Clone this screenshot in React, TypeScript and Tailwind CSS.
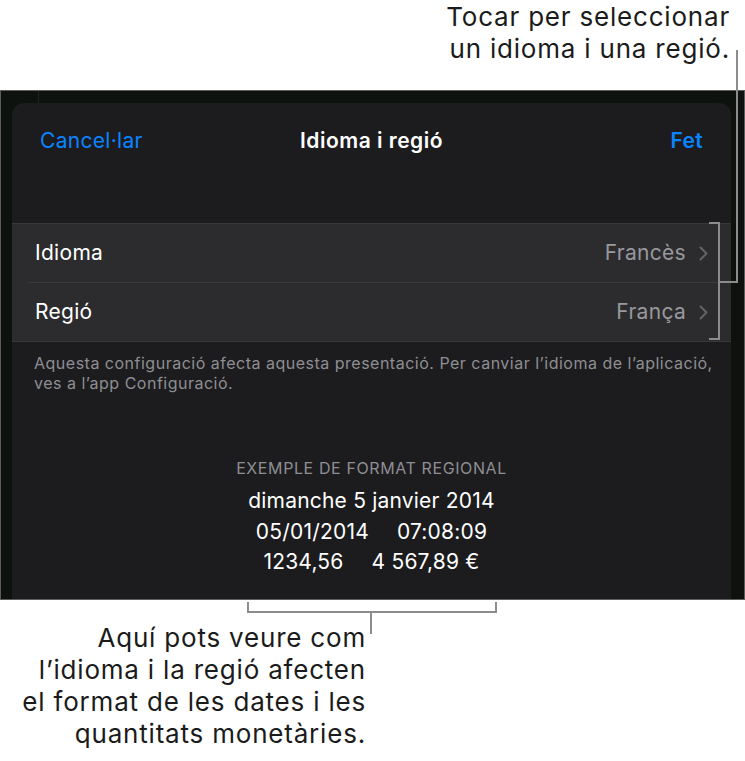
const rows = [
  { label: 'Idioma', value: 'Francès' },
  { label: 'Regió', value: 'França' },
];

function Chevron() {
  return (
    <svg width="9" height="15" viewBox="0 0 9 15" fill="none" stroke="#636366" strokeWidth={2} strokeLinecap="round" strokeLinejoin="round">
      <path d="M1.5 1.5 L7.5 7.5 L1.5 13.5" />
    </svg>
  );
}

function Connectors() {
  return (
    <svg
      className="pointer-events-none absolute left-0 top-0"
      width={745}
      height={761}
      viewBox="0 0 745 761"
      fill="none"
      stroke="#8c8c8c"
      strokeWidth={2}
    >
      <path d="M737 50 V282 H719" />
      <path d="M709 223 H719 V339 H709" />
      <path d="M248 602 V612 H496 V602" />
      <path d="M371 612 V634" />
      <path d="M38.5 91 V103" stroke="#1f231f" strokeWidth={1} />
    </svg>
  );
}

export default function App() {
  return (
    <div className="relative h-[761px] w-[745px] overflow-hidden bg-white font-['Inter',sans-serif]">
      <div className="h-[90px] pr-[15px] pt-px text-right text-[26px] leading-[32px] tracking-[0.8px] text-[#1b1b1b]">
        <p>Tocar per seleccionar</p>
        <p>un idioma i una regió.</p>
      </div>

      <div className="h-[510px] border border-[#5c5c5c] bg-[#0e120e] pl-[11px] pr-[13px] pt-[12px]">
        <div className="h-full overflow-hidden rounded-t-[12px] bg-[#1c1c1e]">
          <div className="grid h-[76px] grid-cols-[1fr_auto_1fr] items-center px-[28px] text-[21px] tracking-[0.3px]">
            <span className="text-[#0a84ff]">Cancel·lar</span>
            <span className="font-semibold tracking-[0.5px] text-white">Idioma i regió</span>
            <span className="text-right font-semibold text-[#0a84ff]">Fet</span>
          </div>

          <div className="mt-[44px] border-y border-[#38383a] bg-[#2c2c2e]">
            {rows.map((r, i) => (
              <div key={r.label}>
                {i > 0 && <div className="ml-[16px] h-px bg-[#3a3a3c]" />}
                <div className="flex h-[58px] items-center justify-between pl-[23px] pr-[23px] text-[21px] tracking-[0.3px]">
                  <span className="text-white">{r.label}</span>
                  <span className="flex items-center gap-[13px] text-[#98989e]">
                    {r.value}
                    <Chevron />
                  </span>
                </div>
              </div>
            ))}
          </div>

          <p className="mt-[11px] pl-[22px] pr-[10px] text-[16px] leading-[20px] tracking-[0.5px] text-[#8e8e93]">
            Aquesta configuració afecta aquesta presentació. Per canviar l’idioma de l’aplicació, ves a l’app Configuració.
          </p>

          <div className="mt-[65px] flex flex-col items-center">
            <p className="text-[16px] leading-[20px] tracking-[0.6px] text-[#8e8e93]">EXEMPLE DE FORMAT REGIONAL</p>
            <div className="mt-[8px] flex flex-col items-center text-[21px] leading-[30.5px] tracking-[0.2px] text-white">
              <p>dimanche 5 janvier 2014</p>
              <p className="flex gap-[28px]">
                <span>05/01/2014</span>
                <span>07:08:09</span>
              </p>
              <p className="flex gap-[28px]">
                <span>1234,56</span>
                <span>4 567,89 €</span>
              </p>
            </div>
          </div>
        </div>
      </div>

      <div className="mt-[22px] w-[366px] text-right text-[26px] leading-[32px] tracking-[0.8px] text-[#1b1b1b]">
        <p>Aquí pots veure com</p>
        <p>l’idioma i la regió afecten</p>
        <p>el format de les dates i les</p>
        <p>quantitats monetàries.</p>
      </div>

      <Connectors />
    </div>
  );
}
